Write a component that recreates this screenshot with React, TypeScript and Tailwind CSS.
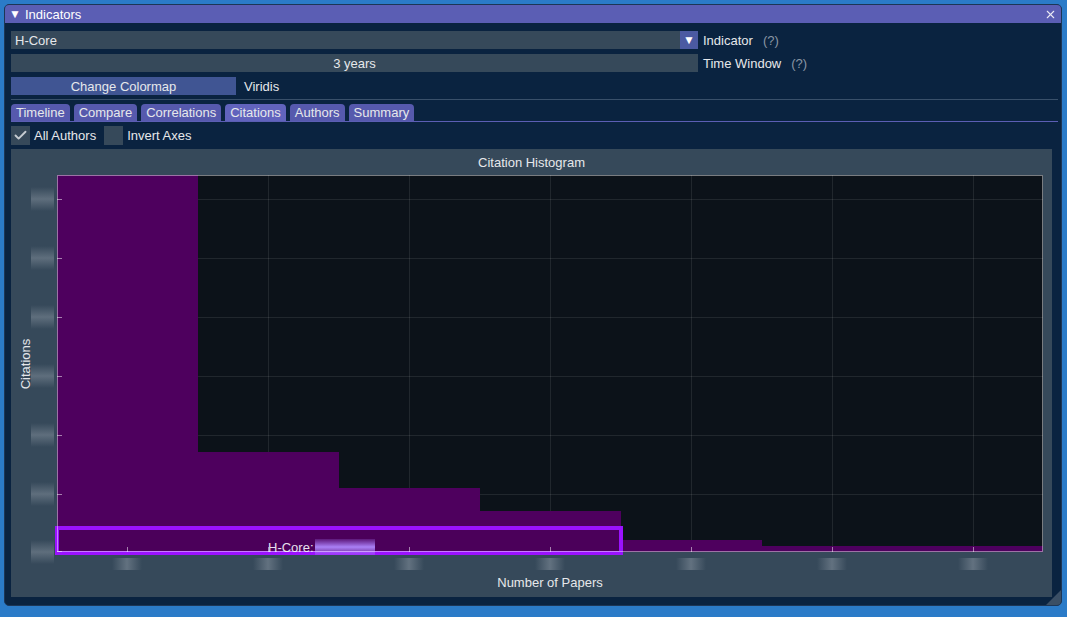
import { Check, X } from 'lucide-react';

const TABS = ['Timeline', 'Compare', 'Correlations', 'Citations', 'Authors', 'Summary'];

// plot geometry (svg coordinates, origin at frame left / plot top)
const PLOT_X = 46;
const PLOT_W = 986;
const PLOT_H = 377;
const GRID_X = [116, 257, 398, 539, 680, 821, 962];
const GRID_Y = [24, 83, 142, 201, 260, 319];

const BARS = [
  { x: 46, w: 141, top: 0 },
  { x: 187, w: 141, top: 277 },
  { x: 328, w: 141, top: 313 },
  { x: 469, w: 141, top: 336 },
  { x: 610, w: 141, top: 365 },
  { x: 751, w: 281, top: 371 },
];

function CitationChart() {
  return (
    <svg width={1041} height={400} className="block" fontFamily="'Liberation Sans', Arial, sans-serif">
      <defs>
        <linearGradient id="fadeV" x1="0" y1="0" x2="0" y2="1">
          <stop offset="0" stopColor="#7a8794" stopOpacity={0} />
          <stop offset="0.5" stopColor="#7a8794" stopOpacity={0.6} />
          <stop offset="1" stopColor="#7a8794" stopOpacity={0} />
        </linearGradient>
        <linearGradient id="fadeH" x1="0" y1="0" x2="1" y2="0">
          <stop offset="0" stopColor="#7a8794" stopOpacity={0} />
          <stop offset="0.5" stopColor="#7a8794" stopOpacity={0.65} />
          <stop offset="1" stopColor="#7a8794" stopOpacity={0} />
        </linearGradient>
        <linearGradient id="fadeLav" x1="0" y1="0" x2="0" y2="1">
          <stop offset="0" stopColor="#a678f8" stopOpacity={0.2} />
          <stop offset="0.5" stopColor="#b088ff" stopOpacity={0.95} />
          <stop offset="1" stopColor="#a678f8" stopOpacity={0.3} />
        </linearGradient>
      </defs>

      {/* y axis title */}
      <text
        x={19}
        y={189}
        fontSize={13}
        fill="#e4e6ea"
        textAnchor="middle"
        transform="rotate(-90 19 189)"
      >
        Citations
      </text>

      {/* tick labels are pixelated out in the source, keep them as soft blobs */}
      {[...GRID_Y, PLOT_H].map((y) => (
        <rect key={y} x={20} y={y - 12} width={23} height={24} fill="url(#fadeV)" />
      ))}
      {GRID_X.map((x) => (
        <rect key={x} x={x - 15} y={383} width={30} height={12} fill="url(#fadeH)" />
      ))}

      {/* plot background + grid */}
      <rect x={PLOT_X} y={0} width={PLOT_W} height={PLOT_H} fill="#0c1219" />
      {GRID_X.map((x) => (
        <line key={x} x1={x + 0.5} y1={0} x2={x + 0.5} y2={PLOT_H} stroke="#ffffff" strokeOpacity={0.09} />
      ))}
      {GRID_Y.map((y) => (
        <line key={y} x1={PLOT_X} y1={y + 0.5} x2={PLOT_X + PLOT_W} y2={y + 0.5} stroke="#ffffff" strokeOpacity={0.09} />
      ))}

      {/* histogram bars */}
      {BARS.map((b) => (
        <rect key={b.x} x={b.x} y={b.top} width={b.w} height={PLOT_H - b.top} fill="#4e005e" />
      ))}

      {/* h-core highlight */}
      <rect x={46} y={353} width={564} height={25} fill="#4b005a" stroke="#9b12ff" strokeWidth={4} />
      <text x={257} y={377} fontSize={13} fill="#e8e0ee">
        H-Core:
      </text>
      <rect x={304} y={364} width={60} height={16} fill="url(#fadeLav)" />

      {/* ticks */}
      {[...GRID_Y, PLOT_H - 1].map((y) => (
        <line key={y} x1={PLOT_X} y1={y + 0.5} x2={PLOT_X + 5} y2={y + 0.5} stroke="#ffffff" strokeOpacity={0.5} />
      ))}
      {GRID_X.map((x) => (
        <line key={x} x1={x + 0.5} y1={PLOT_H - 5} x2={x + 0.5} y2={PLOT_H} stroke="#ffffff" strokeOpacity={0.5} />
      ))}

      {/* plot border */}
      <rect
        x={PLOT_X + 0.5}
        y={0.5}
        width={PLOT_W - 1}
        height={PLOT_H - 1}
        fill="none"
        stroke="#ffffff"
        strokeOpacity={0.45}
      />
    </svg>
  );
}

export default function App() {
  return (
    <div className="w-[1067px] h-[617px] bg-[#2b7bc8] pt-[4px] pl-[4px] font-['Liberation_Sans',Arial,sans-serif] text-[13px] text-[#e6e8eb] leading-none">
      <div className="relative w-[1058px] h-[602px] rounded-[5px] bg-[#0a2340] border border-[#1d3656] overflow-hidden flex flex-col">
        {/* title bar */}
        <div className="h-[18px] shrink-0 bg-[#5b5eb4] flex items-center pl-[4px] pr-[4px]">
          <span className="text-[12px] w-[16px] text-white">▼</span>
          <span className="text-white">Indicators</span>
          <X className="ml-auto w-[13px] h-[13px] text-[#e8e8f4]" strokeWidth={2} />
        </div>

        <div className="flex-1 flex flex-col pl-[6px] pr-[3px] pt-[8px]">
          {/* indicator combo */}
          <div className="flex items-center h-[18px]">
            <div className="w-[687px] h-full bg-[#36495a] flex items-center">
              <span className="pl-[4px]">H-Core</span>
              <div className="ml-auto w-[18px] h-full bg-[#4b5aa2] flex items-center justify-center text-[12px] text-white">▼</div>
            </div>
            <span className="ml-[5px]">Indicator</span>
            <span className="ml-[10px] text-[#8a96a4]">(?)</span>
          </div>

          {/* time window */}
          <div className="flex items-center h-[18px] mt-[5px]">
            <div className="w-[687px] h-full bg-[#36495a] flex items-center justify-center">3 years</div>
            <span className="ml-[5px]">Time Window</span>
            <span className="ml-[10px] text-[#8a96a4]">(?)</span>
          </div>

          {/* colormap */}
          <div className="flex items-center h-[18px] mt-[5px]">
            <div className="w-[225px] h-full bg-[#405593] flex items-center justify-center">Change Colormap</div>
            <span className="ml-[8px]">Viridis</span>
          </div>

          <div className="h-px bg-[#39506a] mt-[4px]" />

          {/* tabs */}
          <div className="mt-[4px] flex gap-[4px] h-[17px] items-end">
            {TABS.map((t) => (
              <div
                key={t}
                className={`h-full px-[5px] rounded-t-[4px] flex items-center ${
                  t === 'Citations' ? 'bg-[#6163bd]' : 'bg-[#5659ad]'
                }`}
              >
                {t}
              </div>
            ))}
          </div>
          <div className="h-px bg-[#5b5eb4]" />

          {/* checkboxes */}
          <div className="flex items-center h-[19px] mt-[4px]">
            <div className="w-[19px] h-[19px] bg-[#36495a] flex items-center justify-center">
              <Check className="w-[15px] h-[15px] text-[#c6ccd2]" strokeWidth={3} />
            </div>
            <span className="ml-[4px]">All Authors</span>
            <div className="ml-[8px] w-[19px] h-[19px] bg-[#36495a]" />
            <span className="ml-[4px]">Invert Axes</span>
          </div>

          {/* plot frame */}
          <div className="mt-[4px] w-[1041px] h-[448px] bg-[#36495a] flex flex-col">
            <div className="h-[26px] flex items-center justify-center pt-[1px]">Citation Histogram</div>
            <CitationChart />
            <div className="h-[15px] pl-[46px] pr-[9px] flex items-center justify-center">Number of Papers</div>
          </div>
        </div>

        {/* resize grip */}
        <div className="absolute right-0 bottom-0 w-0 h-0 border-l-[15px] border-l-transparent border-b-[15px] border-b-[#3b4f65]" />
      </div>
    </div>
  );
}
